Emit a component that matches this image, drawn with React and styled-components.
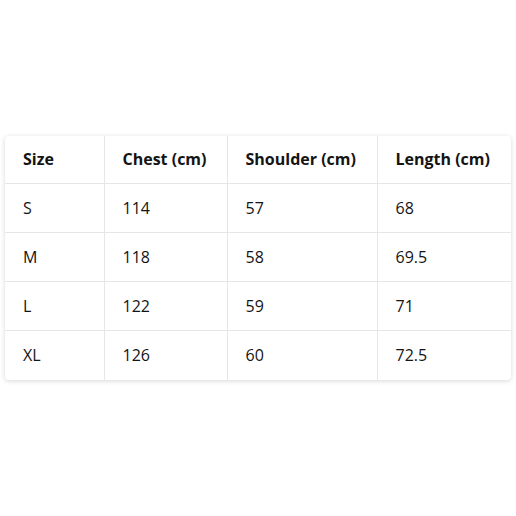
import React from 'react';
import styled, { createGlobalStyle } from 'styled-components';

const GlobalStyle = createGlobalStyle`
  html, body {
    margin: 0;
    padding: 0;
    background: #ffffff;
  }
  body {
    font-family: "Open Sans", "Noto Sans", "Liberation Sans", sans-serif;
    color: #111;
  }
`;

const Page = styled.main`
  width: 516px;
  height: 516px;
  display: flex;
  align-items: center;
  justify-content: center;
  box-sizing: border-box;
`;

const Card = styled.div`
  width: 506px;
  margin-top: -1px;
  background: #fff;
  border-radius: 4px;
  box-shadow: 0 1px 5px rgba(0, 0, 0, 0.16);
  overflow: hidden;
`;

const Table = styled.table`
  width: 100%;
  border-collapse: collapse;
  table-layout: fixed;
  font-size: 16px;
`;

const Cell = styled.td`
  height: ${p => (p.$head ? '48px' : '49px')};
  padding: 0 0 0 18px;
  box-sizing: border-box;
  text-align: left;
  font-weight: ${p => (p.$head ? 700 : 400)};
  color: #141414;
  border-right: 1px solid #e6e6e6;
  border-bottom: 1px solid #e6e6e6;
  &:last-child {
    border-right: none;
  }
`;

const Row = styled.tr`
  &:last-child td {
    border-bottom: none;
  }
`;

const widths = [99, 123, 150, 134];
const headers = ['Size', 'Chest (cm)', 'Shoulder (cm)', 'Length (cm)'];
const rows = [
  ['S', '114', '57', '68'],
  ['M', '118', '58', '69.5'],
  ['L', '122', '59', '71'],
  ['XL', '126', '60', '72.5'],
];

export default function App() {
  return (
    <>
      <GlobalStyle />
      <Page>
        <Card>
          <Table>
            <colgroup>
              {widths.map((w, i) => (
                <col key={i} style={{ width: w }} />
              ))}
            </colgroup>
            <thead>
              <Row>
                {headers.map(h => (
                  <Cell as="th" $head key={h}>{h}</Cell>
                ))}
              </Row>
            </thead>
            <tbody>
              {rows.map(r => (
                <Row key={r[0]}>
                  {r.map((v, i) => (
                    <Cell key={i}>{v}</Cell>
                  ))}
                </Row>
              ))}
            </tbody>
          </Table>
        </Card>
      </Page>
    </>
  );
}
